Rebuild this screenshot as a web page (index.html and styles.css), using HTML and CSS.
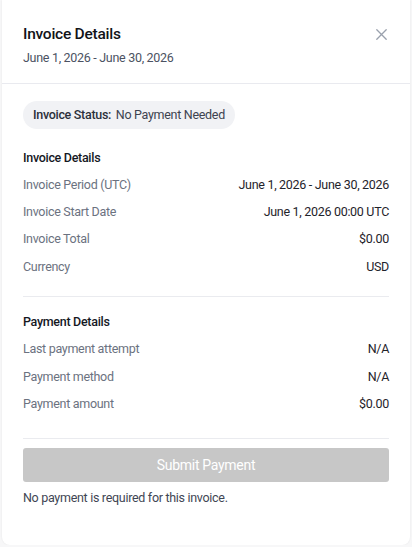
FILE: index.html
```html
<!DOCTYPE html>
<html lang="en">
<head>
<meta charset="utf-8">
<title>Invoice Details</title>
<link rel="stylesheet" href="styles.css">
</head>
<body>
<div class="panel">
  <header class="panel-header">
    <div class="titles">
      <h1 class="title">Invoice Details</h1>
      <div class="subtitle">June 1, 2026 - June 30, 2026</div>
    </div>
    <button class="close" aria-label="Close">
      <svg width="11" height="11" viewBox="0 0 11 11"><path d="M0.8 0.8L10.2 10.2M10.2 0.8L0.8 10.2" stroke="#9aa1ad" stroke-width="1.3" stroke-linecap="round"/></svg>
    </button>
  </header>
  <div class="panel-body">
    <div class="status-pill"><span class="status-label">Invoice Status:</span> No Payment Needed</div>

    <section class="section first">
      <h2 class="section-title">Invoice Details</h2>
      <div class="row"><span class="label">Invoice Period (UTC)</span><span class="value">June 1, 2026 - June 30, 2026</span></div>
      <div class="row"><span class="label">Invoice Start Date</span><span class="value">June 1, 2026 00:00 UTC</span></div>
      <div class="row"><span class="label">Invoice Total</span><span class="value">$0.00</span></div>
      <div class="row"><span class="label">Currency</span><span class="value">USD</span></div>
    </section>

    <hr class="divider d1">

    <section class="section">
      <h2 class="section-title">Payment Details</h2>
      <div class="row"><span class="label">Last payment attempt</span><span class="value">N/A</span></div>
      <div class="row"><span class="label">Payment method</span><span class="value">N/A</span></div>
      <div class="row"><span class="label">Payment amount</span><span class="value">$0.00</span></div>
    </section>

    <hr class="divider d2">

    <button class="submit" disabled>Submit Payment</button>
    <p class="note">No payment is required for this invoice.</p>
  </div>
</div>
</body>
</html>
```
FILE: styles.css
```css
* { box-sizing: border-box; }
html, body {
  margin: 0;
  padding: 0;
  background: #f7f7f8;
  font-family: Roboto, "Liberation Sans", Arial, sans-serif;
}
.panel {
  margin-left: 2px;
  width: 408px;
  height: 545px;
  background: #ffffff;
  border-radius: 0 0 8px 8px;
  box-shadow: 0 0 2px rgba(0, 0, 0, 0.08);
  display: flex;
  flex-direction: column;
  letter-spacing: -0.3px;
}
.panel-header {
  display: flex;
  justify-content: space-between;
  align-items: flex-start;
  padding: 22px 21px 15px 21px;
  border-bottom: 1px solid #e9eaef;
}
.title {
  margin: 0;
  font-size: 15.5px;
  line-height: 24px;
  font-weight: 500;
  letter-spacing: -0.25px;
  color: #111318;
}
.subtitle {
  margin-top: 2px;
  font-size: 12.5px;
  line-height: 20px;
  color: #4b5262;
}
.close {
  border: 0;
  background: none;
  padding: 0;
  margin: 7px 2px 0 0;
  width: 11px;
  height: 11px;
  display: flex;
}
.panel-body {
  padding: 17px 21px 0 21px;
  display: flex;
  flex-direction: column;
  align-items: stretch;
}
.status-pill {
  align-self: flex-start;
  background: #f1f2f5;
  border-radius: 14px;
  padding: 4px 10px;
  height: 27.5px;
  font-size: 12.5px;
  line-height: 19.5px;
  color: #3d4350;
}
.status-label {
  font-weight: 500;
  color: #2b303b;
  margin-right: 2px;
}
.section.first { margin-top: 15px; }
.section-title {
  margin: 0;
  font-size: 12.5px;
  line-height: 27.3px;
  font-weight: 500;
  color: #15181f;
}
.row {
  display: flex;
  justify-content: space-between;
  font-size: 12.5px;
  line-height: 27.3px;
}
.label { color: #6b7280; }
.value { color: #1f232b; }
.divider {
  border: 0;
  border-top: 1px solid #eaebef;
  margin: 0;
}
.d1 { margin-top: 16px; margin-bottom: 11px; }
.d2 { margin-top: 21px; margin-bottom: 9px; }
.submit {
  height: 34px;
  border: 0;
  border-radius: 3px;
  background: #c7c7c7;
  color: #ffffff;
  font-family: inherit;
  font-size: 14px;
  letter-spacing: -0.3px;
  font-weight: 400;
}
.note {
  margin: 6px 0 0 0;
  font-size: 12.5px;
  line-height: 20px;
  color: #3f4654;
}
```
